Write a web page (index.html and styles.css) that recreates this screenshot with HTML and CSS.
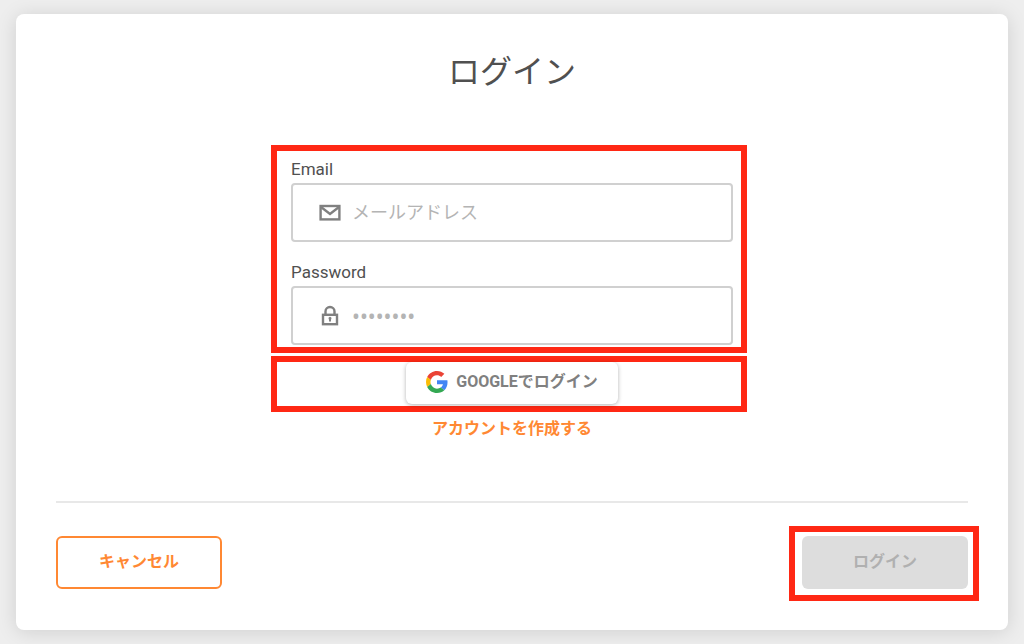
FILE: index.html
```
<!DOCTYPE html>
<html lang="ja">

<head>
	<meta charset="utf-8">
	<title>ログイン</title>
	<link rel="stylesheet" href="styles.css">
</head>

<body>
	<form class="card">
		<h1 class="title">ログイン</h1>
		<div class="content">
			<div class="mark mark-fields">
				<div class="field">
					<label for="email">Email</label>
					<div class="input-box">
						<svg class="icon" viewBox="0 0 24 24" aria-hidden="true">
							<rect x="2.600" y="5" width="18.800" height="13.400"/>
							<path d="M3 6l9 7 9-7"/>
						</svg>
						<input type="email" id="email" placeholder="メールアドレス">
					</div>
				</div>
				<div class="field">
					<label for="password">Password</label>
					<div class="input-box">
						<svg class="icon" viewBox="0 0 24 24" aria-hidden="true">
							<rect x="5" y="10.800" width="14" height="9.400"/>
							<path d="M7.500 10.500V7.500a4.500 4.500 0 0 1 9 0v3"/>
							<path class="keyhole" d="M12 14v3.500"/>
							<circle class="keyhole" cx="12" cy="14.200" r=".5"/>
						</svg>
						<input type="password" id="password" placeholder="••••••••">
					</div>
				</div>
			</div>
			<div class="mark mark-google">
				<button type="button" class="btn-google">
					<svg class="google-logo" viewBox="0 0 48 48" aria-hidden="true">
						<path fill="#EA4335" d="M24 9.500c3.540 0 6.710 1.220 9.210 3.600l6.850-6.850C35.900 2.380 30.470 0 24 0 14.620 0 6.510 5.380 2.560 13.220l7.980 6.190C12.430 13.720 17.740 9.500 24 9.500z"/>
						<path fill="#4285F4" d="M46.980 24.550c0-1.570-.15-3.090-.38-4.550H24v9.020h12.940c-.58 2.960-2.260 5.480-4.780 7.180l7.730 6c4.510-4.180 7.090-10.360 7.090-17.650z"/>
						<path fill="#FBBC05" d="M10.530 28.590c-.48-1.450-.76-2.990-.76-4.590s.27-3.140.76-4.590l-7.980-6.190C.92 16.460 0 20.120 0 24c0 3.880.92 7.540 2.560 10.780l7.970-6.190z"/>
						<path fill="#34A853" d="M24 48c6.480 0 11.930-2.130 15.890-5.810l-7.730-6c-2.150 1.450-4.920 2.300-8.160 2.300-6.260 0-11.570-4.220-13.470-9.910l-7.980 6.190C6.510 42.620 14.620 48 24 48z"/>
					</svg>
					<span>GOOGLEでログイン</span>
				</button>
			</div>
			<a href="#" class="create">アカウントを作成する</a>
		</div>
		<div class="footer">
			<button type="button" class="btn btn-cancel">キャンセル</button>
			<div class="mark mark-login">
				<button type="submit" class="btn btn-login" disabled>ログイン</button>
			</div>
		</div>
	</form>
</body>

</html>
```
FILE: styles.css
```
* {
	box-sizing: border-box;
}

body {
	margin: 0;
	padding: 14px 16px;
	background-color: #eeeeee;
	font-family: Roboto, "Noto Sans CJK JP", sans-serif;
	color: #505050;
}

.card {
	padding: 34px 40px 29px;
	background-color: white;
	border-radius: 8px;
	box-shadow: 0 2px 20px rgba(0, 0, 0, 0.13);
}

.title {
	margin: 0;
	font-size: 32px;
	line-height: 48px;
	font-weight: 400;
	text-align: center;
}

.content {
	max-width: 442px;
	margin: 49px auto 0;
	text-align: center;
}

/* 赤枠 */
.mark {
	border: 6px solid #ff2814;
}

.mark-fields {
	display: flex;
	flex-direction: column;
	gap: 18px;
	margin: 0 -14px 0 -20px;
	padding: 6px 8px 2px 14px;
	text-align: left;
}

.field label {
	display: block;
	margin-bottom: 2px;
	font-size: 17px;
	line-height: 24px;
}

.input-box {
	display: flex;
	align-items: center;
	gap: 10px;
	height: 59px;
	padding: 0 25px;
	border: 2px solid #d0d0d0;
	border-radius: 4px;
}

.icon {
	width: 24px;
	height: 24px;
	fill: none;
	stroke: #808080;
	stroke-width: 2.4;
}

.icon .keyhole {
	stroke-width: 2;
}

.input-box input {
	flex: 1;
	min-width: 0;
	height: 24px;
	padding: 0;
	border: 0;
	outline: 0;
	font-family: inherit;
	font-size: 18px;
	line-height: 24px;
	color: #505050;
}

.input-box input::placeholder {
	color: #b4b4b4;
}

#password {
	font-family: "Noto Sans", sans-serif;
	font-size: 21px;
}

.mark-google {
	margin: 3px -14px 0 -20px;
	padding: 0 8px 2px 14px;
	text-align: center;
}

.btn-google {
	display: flex;
	align-items: center;
	justify-content: center;
	gap: 8px;
	width: 212px;
	height: 42px;
	margin: 0 auto;
	padding: 0 0 2px;
	border: 0;
	border-radius: 6px;
	background-color: white;
	box-shadow: 0 1px 4px rgba(0, 0, 0, 0.3);
	font-family: inherit;
	font-size: 16px;
	font-weight: 700;
	line-height: 24px;
	color: #808080;
}

.google-logo {
	width: 22px;
	height: 22px;
}

.create {
	display: inline-block;
	margin-top: 5px;
	font-size: 16px;
	font-weight: 700;
	line-height: 24px;
	color: #ff8833;
	text-decoration: none;
}

.footer {
	display: flex;
	align-items: flex-start;
	justify-content: space-between;
	margin-top: 60px;
	padding-top: 23px;
	border-top: 2px solid #e8e8e8;
}

.btn {
	width: 166px;
	height: 53px;
	padding: 0 0 2px;
	border: 0;
	border-radius: 6px;
	font-family: inherit;
	font-size: 16px;
	font-weight: 700;
	line-height: 24px;
}

.btn-cancel {
	margin-top: 10px;
	border: 2px solid #ff8833;
	background-color: white;
	color: #ff8833;
}

.mark-login {
	display: flex;
	margin-right: -11px;
	padding: 4px 5px 6px 7px;
}

.btn-login {
	background-color: #dddddd;
	color: #b0b0b0;
}
```
